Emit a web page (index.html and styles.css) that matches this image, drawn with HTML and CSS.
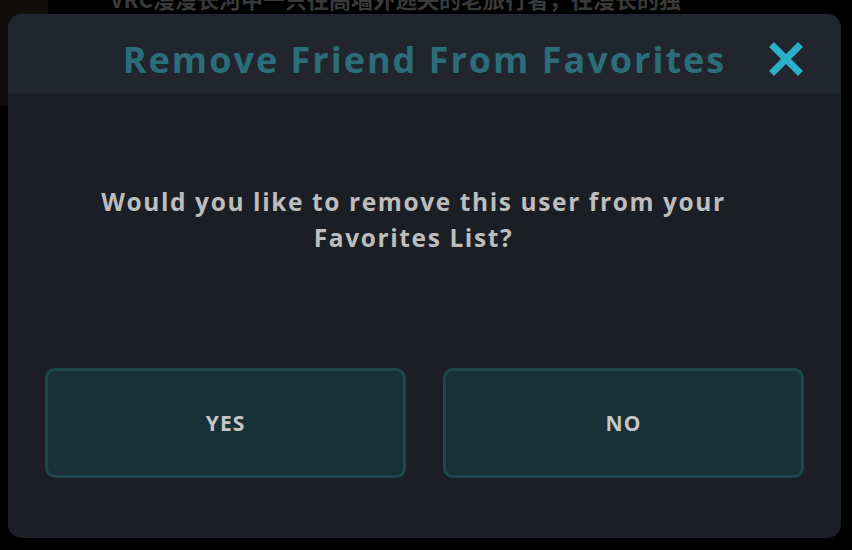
FILE: index.html
```html
<!DOCTYPE html>
<html lang="en">
<head>
    <meta charset="UTF-8">
    <meta name="viewport" content="width=device-width, initial-scale=1.0">
    <title>Remove Friend From Favorites</title>
    <link rel="stylesheet" href="styles.css">
</head>
<body>

    <!-- page behind the dialog -->
    <div id="page">
        <div id="sideThumb"></div>
        <div id="bioText">VRC漫漫长河中一只往高墙外逃失的老旅行者，往漫长的独</div>
    </div>

    <!-- dialog -->
    <div id="overlay">
        <div id="modal">
            <div id="modalHeader">
                <h1 id="modalTitle">Remove Friend From Favorites</h1>
                <button id="closeButton" aria-label="Close">
                    <svg width="34" height="34" viewBox="0 0 34 34">
                        <path d="M5 5 L29 29 M29 5 L5 29" stroke="#2ab1c9" stroke-width="7" stroke-linecap="square" fill="none"/>
                    </svg>
                </button>
            </div>
            <div id="modalBody">
                <p id="modalMessage">Would you like to remove this user from your Favorites List?</p>
                <div id="modalButtons">
                    <button class="modalButton">YES</button>
                    <button class="modalButton">NO</button>
                </div>
            </div>
        </div>
    </div>

</body>
</html>
```

FILE: styles.css
```css
body {
    margin: 0;
    padding: 0;
    background-color: #000;
    font-family: "Open Sans", "Noto Sans", sans-serif;
    width: 852px;
    height: 550px;
    overflow: hidden;
    position: relative;
}

/* Arkadaki sayfa */
#page {
    display: flex;
    height: 110px;
}

#sideThumb {
    width: 48px;
    height: 106px;
    background-color: #110d0b;
}

#bioText {
    margin-left: 62px;
    margin-top: -18px;
    font-family: "Noto Sans CJK SC", sans-serif;
    font-weight: bold;
    font-size: 22px;
    color: #3a3a3a;
    white-space: nowrap;
}

/* Dialog */
#overlay {
    position: absolute;
    left: 8px;
    top: 14px;
    width: 833px;
    height: 524px;
}

#modal {
    height: 100%;
    background-color: #1b1e25;
    border-radius: 14px;
    overflow: hidden;
    display: flex;
    flex-direction: column;
}

#modalHeader {
    height: 80px;
    box-sizing: border-box;
    padding-top: 11px;
    background-color: #21252e;
    display: flex;
    align-items: center;
    justify-content: center;
    position: relative;
}

#modalTitle {
    margin: 0;
    font-size: 36px;
    font-weight: bold;
    color: #2c6d7a;
    letter-spacing: 2px;
}

#closeButton {
    position: absolute;
    right: 38px;
    top: 28px;
    background: none;
    border: none;
    padding: 0;
    cursor: pointer;
    display: flex;
}

#modalBody {
    flex: 1;
    display: flex;
    flex-direction: column;
    align-items: center;
    padding: 0 37px;
}

#modalMessage {
    margin: 90px 22px 0 0;
    width: 660px;
    text-align: center;
    font-size: 24.5px;
    font-weight: bold;
    line-height: 36px;
    color: #bdbdbd;
    letter-spacing: 1.6px;
}

#modalButtons {
    margin-top: 112px;
    display: flex;
    gap: 37px;
    width: 100%;
}

.modalButton {
    flex: 1;
    height: 110px;
    background-color: #183137;
    border: 3px solid #1f474b;
    border-radius: 10px;
    color: #c6c6c6;
    font-family: "Open Sans", "Noto Sans", sans-serif;
    font-size: 21px;
    font-weight: bold;
    letter-spacing: 1px;
    cursor: pointer;
}
```
